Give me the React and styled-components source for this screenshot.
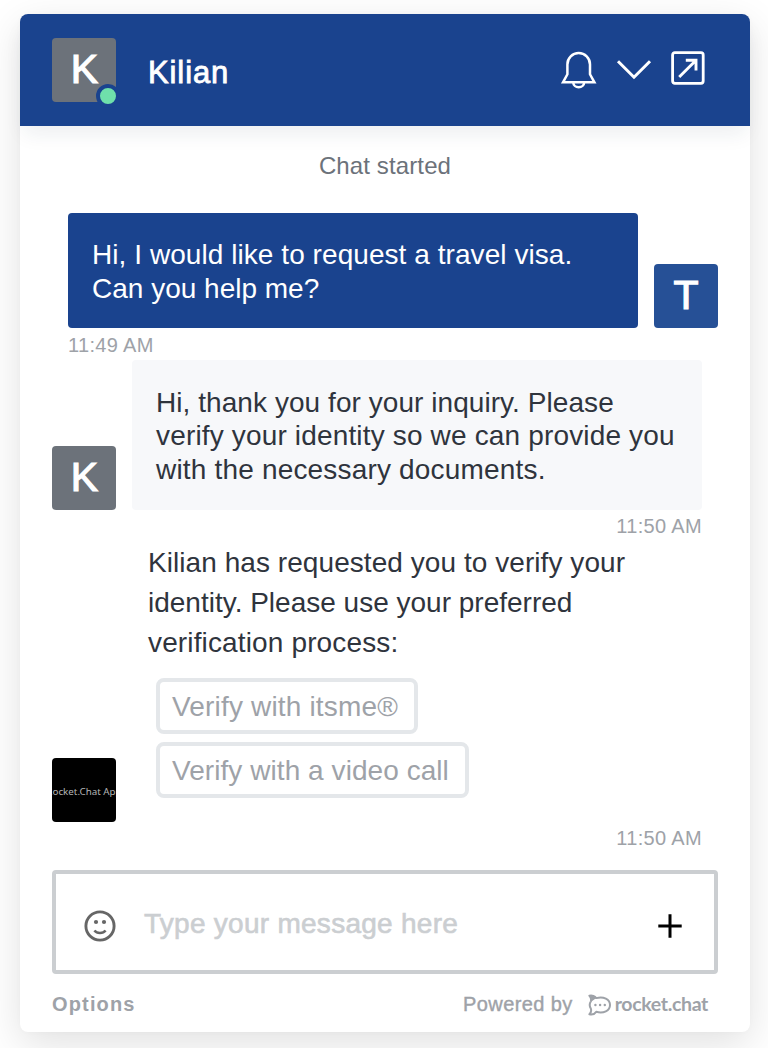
import React from 'react';
import styled, { createGlobalStyle } from 'styled-components';

const GlobalStyle = createGlobalStyle`
  * { box-sizing: border-box; }
  body {
    margin: 0;
    background: #fff;
    font-family: "Liberation Sans", Arial, sans-serif;
  }
`;

const Page = styled.div`
  width: 768px;
  height: 1048px;
  padding: 14px 18px 16px 20px;
  overflow: hidden;
`;

const Widget = styled.div`
  display: flex;
  flex-direction: column;
  height: 1018px;
  border-radius: 8px;
  background: #fff;
  box-shadow: 0 0 6px rgba(0, 0, 0, 0.02), 0 12px 40px rgba(0, 0, 0, 0.12);
`;

const Header = styled.header`
  display: flex;
  align-items: center;
  height: 112px;
  flex: none;
  padding: 0 44px 0 32px;
  border-radius: 8px 8px 0 0;
  background: #1a438e;
  box-shadow: 0 12px 20px -4px rgba(31, 50, 75, 0.08);
`;

const Avatar = styled.div`
  display: flex;
  flex: none;
  align-items: center;
  justify-content: center;
  width: 64px;
  height: 64px;
  padding-left: ${(p) => p.$shift || 0}px;
  padding-bottom: 2px;
  border-radius: 4px;
  overflow: hidden;
  background: ${(p) => p.$bg || '#6c727a'};
  color: #fff;
  font-size: 41px;
  line-height: 62px;
  -webkit-text-stroke: 1.2px #fff;
`;

const AvatarWrap = styled.div`
  position: relative;
  width: 64px;
  height: 64px;
`;

const StatusClip = styled.div`
  position: absolute;
  left: 0;
  top: 0;
  width: 64px;
  height: 70px;
  overflow: hidden;
`;

const Status = styled.span`
  position: absolute;
  left: 44px;
  top: 46px;
  width: 24px;
  height: 24px;
  border: 4px solid #1a438e;
  border-radius: 50%;
  background: #6fe0ab;
`;

const AppAvatar = styled(Avatar)`
  font-family: "Noto Sans", sans-serif;
  font-size: 9.8px;
  line-height: 14px;
  padding-top: 5px;
  color: #b4b4b4;
  white-space: nowrap;
  -webkit-text-stroke: 0;
`;

const AgentName = styled.h1`
  margin: 0 auto 0 32px;
  padding-top: 5px;
  color: #fff;
  font-size: 31px;
  line-height: 38px;
  font-weight: 400;
  letter-spacing: 0.9px;
  -webkit-text-stroke: 0.8px #fff;
`;

const Actions = styled.div`
  display: flex;
  align-items: center;
  gap: 20px;
  height: 40px;
  margin-top: -4px;

  svg { overflow: visible; }
`;

const Log = styled.main`
  display: flex;
  flex-direction: column;
  flex: none;
  height: 744px;
  padding: 23px 32px 0;
`;

const Notice = styled.div`
  height: 34px;
  color: #6c727a;
  font-size: 24px;
  line-height: 34px;
  text-align: center;
  letter-spacing: 0.12px;
`;

const Row = styled.div`
  display: flex;
  align-items: flex-end;
  gap: 16px;
  padding-left: ${(p) => (p.$mine ? 16 : 0)}px;
  margin-top: ${(p) => p.$gap || 0}px;
`;

const Bubble = styled.div`
  width: 570px;
  height: ${(p) => p.$h}px;
  padding: ${(p) => (p.$mine ? 25 : 25.6)}px 24px 0;
  border-radius: 4px;
  background: ${(p) => (p.$mine ? '#1a438e' : '#f7f8fa')};
  color: ${(p) => (p.$mine ? '#fff' : '#2f343d')};
  font-size: 28px;
  line-height: 33.6px;
`;

const Line = styled.span`
  display: block;
  white-space: nowrap;
  letter-spacing: ${(p) => p.$track || 0}px;
`;

const Time = styled.time`
  display: block;
  height: 32px;
  padding: 0 ${(p) => (p.$right ? 16 : 0)}px 0 ${(p) => (p.$right ? 0 : 16)}px;
  color: #9ea2a8;
  font-size: 20px;
  line-height: ${(p) => (p.$right ? 32 : 34)}px;
  text-align: ${(p) => (p.$right ? 'right' : 'left')};
  letter-spacing: 0.35px;
`;

const Block = styled.div`
  display: flex;
  flex-direction: column;
  align-items: flex-start;
  height: 279px;
  padding-left: 16px;
  color: #2f343d;
  font-size: 28px;
  line-height: 40px;
`;

const Choices = styled.div`
  display: flex;
  flex-direction: column;
  align-items: flex-start;
  gap: 8px;
  padding: 15px 0 0 8px;
`;

const Choice = styled.button`
  width: ${(p) => p.$w}px;
  height: 56px;
  padding: 1px 0 0 12px;
  border: 4px solid #e4e7ea;
  border-radius: 8px;
  background: #fff;
  color: #9ea2a8;
  font: 28px/47px "Liberation Sans", Arial, sans-serif;
  text-align: left;
`;

const Composer = styled.div`
  display: flex;
  align-items: center;
  flex: none;
  height: 104px;
  margin: 0 32px;
  padding: 8px 32px 0 28px;
  border: 4px solid #cbced1;
  border-radius: 4px;
`;

const Placeholder = styled.span`
  flex: 1;
  margin: -4px 0 0 28px;
  color: #cbced1;
  font-size: 28px;
  line-height: 34px;
  letter-spacing: 0.27px;
  -webkit-text-stroke: 0.6px #cbced1;
`;

const Footer = styled.footer`
  display: flex;
  align-items: center;
  justify-content: space-between;
  height: 58px;
  padding: 3px 42px 0 32px;
  color: #9ea2a8;
  font-size: 20px;
`;

const Options = styled.span`
  font-weight: 700;
  letter-spacing: 1.15px;
`;

const Powered = styled.span`
  display: flex;
  align-items: center;
  letter-spacing: 0.4px;
  -webkit-text-stroke: 0.4px #9ea2a8;
`;

const Brand = styled.span`
  display: flex;
  align-items: center;
  gap: 3px;
  margin-left: 15px;
  font-family: Lato, sans-serif;
  font-size: 19.5px;
  font-weight: 700;
  letter-spacing: -0.35px;
  -webkit-text-stroke: 0;
`;

const BrandName = styled.span`
  padding-bottom: 2px;
`;

const BellIcon = () => (
  <svg width="36" height="40" viewBox="0 0 36 40" fill="none" stroke="#fff" strokeWidth="2.5">
    <path d="M5 34.3 L9.4 26.3 V16.4 A11.3 11.3 0 0 1 32 16.4 V26.3 L36.4 34.3 Z" />
    <path d="M15.3 34.4 A5.4 4.8 0 0 0 26.1 34.4" />
  </svg>
);

const ChevronIcon = () => (
  <svg width="36" height="40" viewBox="0 0 36 40" fill="none" stroke="#fff" strokeWidth="3">
    <path d="M4 13.2 L20 29.2 L36 13.2" />
  </svg>
);

const PopoutIcon = () => (
  <svg width="36" height="40" viewBox="0 0 36 40" fill="none" stroke="#fff">
    <rect x="2.6" y="4.7" width="30.6" height="30.6" rx="2.2" strokeWidth="2.8" />
    <path d="M9.2 29 L26 12.3 M15.8 12.3 H26 V22.6" strokeWidth="2.9" />
  </svg>
);

const SmileIcon = () => (
  <svg width="32" height="32" viewBox="0 0 32 32" fill="none" stroke="#666">
    <circle cx="16" cy="16" r="14.1" strokeWidth="2.9" />
    <circle cx="12" cy="12" r="2.1" fill="#666" stroke="none" />
    <circle cx="20" cy="12" r="2.1" fill="#666" stroke="none" />
    <path d="M10.4 20.4 C13 23.8 19 23.8 21.6 20.4" strokeWidth="2.5" />
  </svg>
);

const PlusIcon = () => (
  <svg width="24" height="24" viewBox="0 0 24 24" stroke="#000" strokeWidth="3">
    <path d="M12 0.3 V23.7 M0.3 12 H23.7" />
  </svg>
);

const RocketIcon = () => (
  <svg width="24" height="22" viewBox="0 0 24 22" fill="none">
    <path
      d="M1.4 1.8 C4 1 7 2.2 8.2 4.1 C15.5 2 22 5.2 22 11 C22 16.8 15.5 19.8 8.2 17.8 C6.7 19.9 4 21 1.4 20.3 C3.3 18.3 3.4 16.4 2.9 14.8 C1.3 12.3 1.3 9.8 2.9 7.3 C3.4 5.2 3.1 3.4 1.4 1.8 Z"
      stroke="#9ea2a8"
      strokeWidth="2"
      strokeLinejoin="round"
    />
    <path d="M1 1.4 C4 .8 7 2.3 8 4.3 L3.5 7.4 C4 5 3 3 1 1.4Z" fill="#9ea2a8" />
    <circle cx="7.4" cy="11" r="1.2" fill="#9ea2a8" />
    <circle cx="12.1" cy="11" r="1.2" fill="#9ea2a8" />
    <circle cx="16.8" cy="11" r="1.2" fill="#9ea2a8" />
  </svg>
);

export default function App() {
  return (
    <Page>
      <GlobalStyle />
      <Widget>
        <Header>
          <AvatarWrap>
            <Avatar $shift={1}>K</Avatar>
            <StatusClip><Status /></StatusClip>
          </AvatarWrap>
          <AgentName>Kilian</AgentName>
          <Actions>
            <BellIcon />
            <ChevronIcon />
            <PopoutIcon />
          </Actions>
        </Header>
        <Log>
          <Notice>Chat started</Notice>
          <Row $mine $gap={30}>
            <Bubble $mine $h={115}>
              <Line $track={0.06}>Hi, I would like to request a travel visa.</Line>
              <Line>Can you help me?</Line>
            </Bubble>
            <Avatar $bg="#265096">T</Avatar>
          </Row>
          <Time>11:49 AM</Time>
          <Row>
            <Avatar $shift={1}>K</Avatar>
            <Bubble $h={150}>
              <Line $track={0.06}>Hi, thank you for your inquiry. Please</Line>
              <Line $track={0.16}>verify your identity so we can provide you</Line>
              <Line $track={0.18}>with the necessary documents.</Line>
            </Bubble>
          </Row>
          <Time $right>11:50 AM</Time>
          <Row $gap={1}>
            <AppAvatar $bg="#000">Rocket.Chat App</AppAvatar>
            <Block>
              <Line $track={0.06}>Kilian has requested you to verify your</Line>
              <Line>identity. Please use your preferred</Line>
              <Line $track={0.14}>verification process:</Line>
              <Choices>
                <Choice $w={262}><Line $track={0.17}>Verify with itsme®</Line></Choice>
                <Choice $w={313}><Line $track={0.06}>Verify with a video call</Line></Choice>
              </Choices>
            </Block>
          </Row>
          <Time $right>11:50 AM</Time>
        </Log>
        <Composer>
          <SmileIcon />
          <Placeholder>Type your message here</Placeholder>
          <PlusIcon />
        </Composer>
        <Footer>
          <Options>Options</Options>
          <Powered>
            Powered by
            <Brand><RocketIcon /><BrandName>rocket.chat</BrandName></Brand>
          </Powered>
        </Footer>
      </Widget>
    </Page>
  );
}
